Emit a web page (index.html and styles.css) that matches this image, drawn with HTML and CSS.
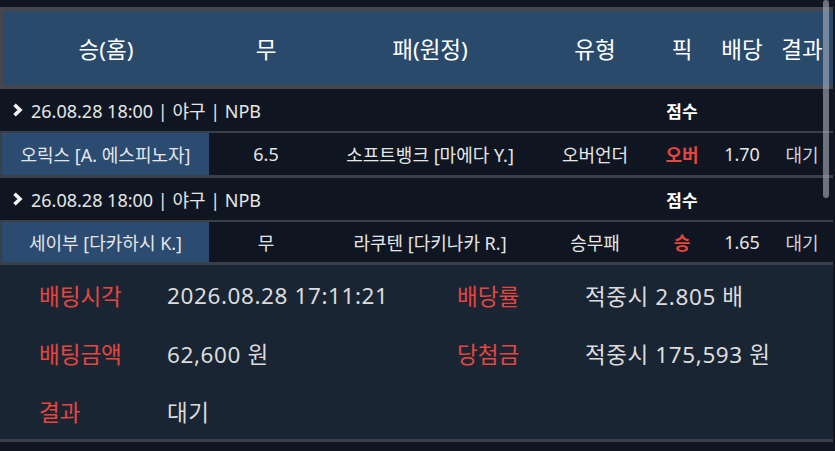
FILE: index.html
```html
<!DOCTYPE html>
<html lang="ko">
<head>
<meta charset="utf-8">
<link rel="stylesheet" href="styles.css">
</head>
<body>
<div class="page">
  <div class="thead">
    <div class="c">승(홈)</div>
    <div class="c">무</div>
    <div class="c">패(원정)</div>
    <div class="c">유형</div>
    <div class="c">픽</div>
    <div class="c">배당</div>
    <div class="c">결과</div>
  </div>

  <div class="league">
    <div class="league-info"><svg class="chev" viewBox="0 0 11 14" width="11" height="14"><path d="M2.5 1.8 L8 7 L2.5 12.2" fill="none" stroke="#f4f4f4" stroke-width="3.6" stroke-linecap="butt" stroke-linejoin="miter"/></svg><span>26.08.28 18:00 | 야구 | NPB</span></div>
    <div class="market">점수</div>
  </div>
  <div class="match">
    <div class="home">오릭스 [A. 에스피노자]</div>
    <div class="c">6.5</div>
    <div class="c">소프트뱅크 [마에다 Y.]</div>
    <div class="c">오버언더</div>
    <div class="c pick">오버</div>
    <div class="c">1.70</div>
    <div class="c dim">대기</div>
  </div>

  <div class="league">
    <div class="league-info"><svg class="chev" viewBox="0 0 11 14" width="11" height="14"><path d="M2.5 1.8 L8 7 L2.5 12.2" fill="none" stroke="#f4f4f4" stroke-width="3.6" stroke-linecap="butt" stroke-linejoin="miter"/></svg><span>26.08.28 18:00 | 야구 | NPB</span></div>
    <div class="market">점수</div>
  </div>
  <div class="match match2">
    <div class="home">세이부 [다카하시 K.]</div>
    <div class="c">무</div>
    <div class="c">라쿠텐 [다키나카 R.]</div>
    <div class="c">승무패</div>
    <div class="c pick">승</div>
    <div class="c">1.65</div>
    <div class="c dim">대기</div>
  </div>

  <div class="details">
    <div class="lbl">배팅시각</div><div class="val">2026.08.28 17:11:21</div>
    <div class="lbl">배당률</div><div class="val">적중시 2.805 배</div>
    <div class="lbl">배팅금액</div><div class="val">62,600 원</div>
    <div class="lbl">당첨금</div><div class="val">적중시 175,593 원</div>
    <div class="lbl">결과</div><div class="val">대기</div>
    <div></div><div></div>
  </div>
</div>
<div class="scrollbar"></div>
</body>
</html>
```

FILE: styles.css
```css
html, body {
  margin: 0;
  padding: 0;
  background: #0f1621;
  width: 835px;
  height: 451px;
  overflow: hidden;
}
body {
  font-family: "Noto Sans", "Noto Sans CJK KR", sans-serif;
  color: #e8e8e8;
  position: relative;
}
.page {
  padding-top: 7px;
  width: 833px;
}
.thead {
  display: grid;
  grid-template-columns: 206px 114px 214px 116px 58px 62px 58px;
  height: 74px;
  align-items: center;
  background: #2a4a6c;
  border: 4px solid #45474b;
  border-right: none;
  border-left-width: 3px;
  font-size: 22.5px;
  color: #ffffff;
}
.c {
  text-align: center;
  white-space: nowrap;
}
.league {
  display: grid;
  grid-template-columns: 653px 58px;
  height: 42px;
  align-items: center;
}
.league-info {
  display: flex;
  align-items: center;
  padding-left: 12px;
  font-size: 18px;
  color: #e6e6e6;
  white-space: nowrap;
}
.chev {
  margin-right: 8px;
}
.market {
  text-align: center;
  font-size: 17px;
  font-weight: 700;
  color: #ffffff;
}
.match {
  display: grid;
  grid-template-columns: 207px 114px 214px 116px 58px 62px 58px;
  height: 42px;
  align-items: center;
  border-top: 2px solid #394049;
  border-bottom: 3px solid #394049;
  border-left: 2px solid #394049;
  font-size: 18px;
  color: #e6e6e6;
}
.match2 {
  height: 40px;
}
.home {
  align-self: stretch;
  display: flex;
  align-items: center;
  justify-content: center;
  background: #2b4b71;
  white-space: nowrap;
}
.pick {
  color: #e8453c;
  font-weight: 700;
}
.dim {
  color: #cfd2d6;
}
.details {
  display: grid;
  grid-template-columns: 128px 290px 128px 1fr;
  grid-auto-rows: 58px;
  align-items: center;
  background: #1a2534;
  padding: 1px 0 0 39px;
  height: 173px;
  border-bottom: 3px solid #394049;
  font-size: 22.5px;
  white-space: nowrap;
}
.lbl {
  color: #e5463f;
}
.val {
  color: #dcdcdc;
  letter-spacing: 0.6px;
}
.scrollbar {
  position: absolute;
  top: 0;
  left: 823px;
  width: 6px;
  height: 198px;
  border-radius: 3px;
  background: rgba(170, 178, 190, 0.6);
}
```
